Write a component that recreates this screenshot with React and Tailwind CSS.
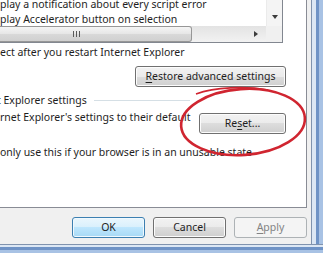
import React from 'react';

const btn =
  'flex items-center justify-center h-[21px] rounded-[3px] border border-[#707070] bg-[linear-gradient(to_bottom,#f2f2f2_0%,#ebebeb_50%,#dddddd_50%,#cfcfcf_100%)] shadow-[inset_0_0_0_1px_#fcfcfc]';

const ListBox = () => (
  <div className="w-[283px] h-[43px] shrink-0 flex flex-col bg-white border-r border-b border-[#828790]">
    <div className="flex h-[26px]">
      <div className="flex-1 overflow-hidden whitespace-nowrap">
        <div className="-mt-[3px]">
          <div>play a notification about every script error</div>
          <div>play Accelerator button on selection</div>
        </div>
      </div>
      <div className="w-[16px] flex flex-col justify-end items-center bg-[#f4f4f4] border-l border-[#ebebeb]">
        <div className="h-[18px] flex items-center justify-center">
          <div className="w-0 h-0 border-l-[3.5px] border-r-[3.5px] border-t-[4px] border-l-transparent border-r-transparent border-t-[#3c3c3c]" />
        </div>
      </div>
    </div>
    <div className="flex h-[16px]">
      <div className="flex-1 flex bg-[linear-gradient(to_bottom,#e3e3e3,#f2f2f2)]">
        <div className="w-[192px] h-full flex items-center rounded-r-[3px] border-r border-t border-b border-[#979797] bg-[linear-gradient(to_bottom,#f5f5f5_0%,#e6e6e6_50%,#d9d9d9_50%,#d0d0d0_100%)]">
          <div className="ml-[73px] flex gap-[2px]">
            <div className="w-px h-[6px] bg-[#5a5a5a]" />
            <div className="w-px h-[6px] bg-[#5a5a5a]" />
            <div className="w-px h-[6px] bg-[#5a5a5a]" />
          </div>
        </div>
        <div className="flex-1" />
        <div className="w-[17px] flex items-center justify-start pl-[5px]">
          <div className="w-0 h-0 border-t-[3.5px] border-b-[3.5px] border-l-[4px] border-t-transparent border-b-transparent border-l-[#3c3c3c]" />
        </div>
      </div>
      <div className="w-[16px] bg-[#f0f0f0]" />
    </div>
  </div>
);

const TabPage = () => (
  <div className="w-[307px] h-[208px] shrink-0 flex flex-col bg-white border-r border-b border-[#898c95] whitespace-nowrap">
    <ListBox />
    <div className="mt-[2px]">ect after you restart Internet Explorer</div>
    <div className="flex justify-end pr-[20px] mt-[6px]">
      <div className={`${btn} w-[151px]`}>
        <span>
          <span className="underline underline-offset-2">R</span>estore advanced settings
        </span>
      </div>
    </div>
    <div className="flex items-center mt-[6px]">
      <span className="-ml-[3px]">t Explorer settings</span>
      <div className="ml-[7px] w-[96px] h-px bg-[#d5dfe5]" />
    </div>
    <div className="flex items-start mt-[2px] pr-[20px]">
      <span>rnet Explorer's settings to their default</span>
      <div className={`${btn} w-[87px] ml-auto mt-[3px]`}>
        <span>
          Re<span className="underline underline-offset-2">s</span>et...
        </span>
      </div>
    </div>
    <div className="mt-[11px]">only use this if your browser is in an unusable state</div>
  </div>
);

const Buttons = () => (
  <div className="flex justify-end gap-[8px] pt-[9px] pr-[4px]">
    <div className="flex items-center justify-center w-[73px] h-[21px] rounded-[3px] border border-[#3c7fb1] bg-[linear-gradient(to_bottom,#eaf6fd_0%,#d9f0fc_50%,#bee6fd_50%,#a7d9f5_100%)] shadow-[inset_0_0_0_1px_#f0f9fe]">
      OK
    </div>
    <div className={`${btn} w-[73px]`}>Cancel</div>
    <div className="flex items-center justify-center w-[73px] h-[21px] rounded-[3px] border border-[#adb2b5] bg-[#f4f4f4] text-[#838383]">
      <span>
        <span className="underline underline-offset-2">A</span>pply
      </span>
    </div>
  </div>
);

export default function App() {
  return (
    <div className="relative w-[323px] h-[253px] overflow-hidden flex flex-col font-['Noto_Sans',sans-serif] text-[10.5px] leading-[15px] text-[#1e1e1e]">
      <div className="flex h-[244px]">
        <div className="w-[311px] flex flex-col bg-[#f0f0f0]">
          <TabPage />
          <Buttons />
        </div>
        <div className="flex-1 flex">
          <div className="w-px bg-[#8093ae]" />
          <div className="w-[4px] bg-[#dce7f4]" />
          <div className="w-[3px] bg-[#6f93c6]" />
          <div className="flex-1 bg-[#a8c2e4]" />
        </div>
      </div>
      <div className="flex-1 flex flex-col">
        <div className="h-px bg-[#8093ae]" />
        <div className="h-[2px] bg-[#dce7f4]" />
        <div className="h-[3px] bg-[#6f93c6]" />
        <div className="flex-1 bg-[#a8c2e4]" />
      </div>
      <svg className="absolute inset-0 pointer-events-none" width="323" height="253" viewBox="0 0 323 253">
        <ellipse cx="243" cy="122" rx="62" ry="33" transform="rotate(-4 243 122)" fill="none" stroke="#d02530" strokeWidth="2.6" />
        <path d="M196 94 C 215 87, 245 86, 268 90" fill="none" stroke="#d02530" strokeWidth="1.6" />
      </svg>
    </div>
  );
}
